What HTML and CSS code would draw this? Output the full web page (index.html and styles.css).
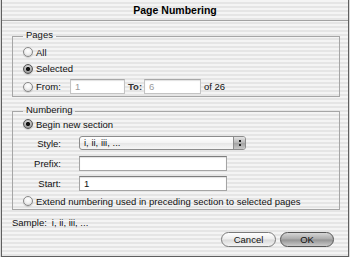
FILE: index.html
```html
<!DOCTYPE html>
<html lang="en">
<head>
    <meta charset="UTF-8">
    <title>Page Numbering</title>
    <link rel="stylesheet" href="styles.css">
</head>
<body>
    <div class="window">
        <div class="titlebar">Page Numbering</div>

        <fieldset class="group pages">
            <legend>Pages</legend>
            <div class="row r-all"><span class="radio"></span><span class="text">All</span></div>
            <div class="row r-sel"><span class="radio on"></span><span class="text">Selected</span></div>
            <div class="row r-from">
                <span class="radio"></span>
                <span class="text from-label">From:</span>
                <span class="field disabled w-from">1</span>
                <span class="text to-label">To:</span>
                <span class="field disabled w-to">6</span>
                <span class="text of">of 26</span>
            </div>
        </fieldset>

        <fieldset class="group numbering">
            <legend>Numbering</legend>
            <div class="row r-begin"><span class="radio on"></span><span class="text">Begin new section</span></div>
            <div class="field-row">
                <span class="label">Style:</span>
                <div class="popup">
                    <span class="popup-text">i, ii, iii, ...</span>
                    <span class="stepper"><i></i><i></i></span>
                </div>
            </div>
            <div class="field-row">
                <span class="label">Prefix:</span>
                <span class="field w-long"></span>
            </div>
            <div class="field-row">
                <span class="label">Start:</span>
                <span class="field w-long">1</span>
            </div>
            <div class="row r-extend"><span class="radio"></span><span class="text">Extend numbering used in preceding section to selected pages</span></div>
        </fieldset>

        <div class="sample">
            <span>Sample:</span>
            <span class="sample-value">i, ii, iii, ...</span>
        </div>

        <div class="buttons">
            <button class="btn">Cancel</button>
            <button class="btn default">OK</button>
        </div>
    </div>
</body>
</html>
```

FILE: styles.css
```css
body {
    margin: 0;
    background: #d9d9d9;
    font-family: "Liberation Sans", Arial, sans-serif;
    font-size: 9.5px;
    color: #111;
}
.window {
    box-sizing: border-box;
    width: 348px;
    height: 257px;
    margin-left: 1px;
    border: 1px solid #5f5f5f;
    border-top: none;
    background: repeating-linear-gradient(to bottom, #f4f4f4 0, #f4f4f4 2px, #e5e5e5 2px, #e5e5e5 4px);
    display: flex;
    flex-direction: column;
}
.titlebar {
    height: 20px;
    line-height: 21px;
    border-bottom: 1px solid #a2a2a2;
    text-align: center;
    font-weight: bold;
    font-size: 10.5px;
    color: #000;
}
.group {
    margin: 8px 8px 0 10px;
    padding: 1px 0 0 10px;
    border: 1px solid #a6a6a6;
    min-width: 0;
}
.group legend {
    padding: 0 3px 2px;
    line-height: 12px;
    font-size: 9.5px;
}
.numbering {
    margin-top: 7px;
    padding-top: 0;
}
.row {
    display: flex;
    align-items: center;
}
.r-all { height: 16px; }
.r-sel { height: 17px; }
.r-from { height: 19px; }
.r-begin { height: 12px; }
.r-extend { height: 16px; }
.radio {
    box-sizing: border-box;
    width: 10px;
    height: 10px;
    border-radius: 50%;
    border: 1px solid #888;
    background: radial-gradient(circle at 50% 35%, #fff 0, #f2f2f2 45%, #cfcfcf 100%);
    box-shadow: 0 1px 1px rgba(0, 0, 0, 0.15);
    flex-shrink: 0;
}
.radio.on {
    border-color: #555;
    background: radial-gradient(circle, #111 0, #111 1.8px, transparent 2.4px),
                radial-gradient(circle at 50% 30%, #e2e2e2 0, #a8a8a8 60%, #7c7c7c 100%);
}
.row .text {
    margin-left: 3px;
}
.from-label {
    width: 34px;
}
.field {
    box-sizing: border-box;
    display: block;
    height: 15px;
    line-height: 13px;
    padding-left: 4px;
    background: #fff;
    border: 1px solid #a4a4a4;
    border-top-color: #7d7d7d;
    box-shadow: inset 0 1px 1px rgba(0, 0, 0, 0.12);
}
.field.disabled {
    color: #9a9a9a;
    border-color: #c4c4c4;
    border-top-color: #a8a8a8;
}
.w-from { width: 55px; }
.w-to { width: 57px; }
.w-long { width: 148px; }
.to-label {
    width: 16px;
    margin-left: 5px;
    font-weight: bold;
    color: #333;
}
.of {
    margin-left: 4px;
}
.field-row {
    display: flex;
    align-items: center;
    height: 20px;
}
.field-row:first-of-type,
.r-begin + .field-row {
    margin-top: 3px;
}
.label {
    box-sizing: border-box;
    width: 56px;
    padding-right: 18px;
    text-align: right;
}
.popup {
    box-sizing: border-box;
    width: 167px;
    height: 14px;
    display: flex;
    align-items: center;
    border: 1px solid #8c8c8c;
    border-radius: 3px;
    background: linear-gradient(#ffffff, #f3f3f3 50%, #e6e6e6 51%, #f6f6f6);
}
.popup-text {
    flex: 1;
    padding-left: 4px;
    line-height: 12px;
}
.stepper {
    width: 11px;
    height: 12px;
    border-left: 1px solid #8c8c8c;
    border-radius: 0 2px 2px 0;
    background: linear-gradient(#e4e4e4, #b4b4b4 50%, #a2a2a2 51%, #c8c8c8);
    display: flex;
    flex-direction: column;
    align-items: center;
    justify-content: center;
    gap: 2px;
}
.stepper i {
    width: 2px;
    height: 2px;
    background: #222;
}
.sample {
    margin: 7px 0 0 10px;
    height: 12px;
    line-height: 12px;
    display: flex;
    gap: 5px;
}
.buttons {
    margin: 3px 14px 0 0;
    display: flex;
    justify-content: flex-end;
    gap: 4px;
}
.btn {
    box-sizing: border-box;
    height: 15px;
    width: 55px;
    padding: 0;
    border: 1px solid #7a7a7a;
    border-radius: 8px;
    font-family: "Liberation Sans", Arial, sans-serif;
    font-size: 9.5px;
    color: #111;
    background: linear-gradient(#ffffff, #ececec 48%, #d9d9d9 52%, #f4f4f4);
}
.btn.default {
    width: 54px;
    border-color: #555;
    background: linear-gradient(#d6d6d6, #a9a9a9 48%, #939393 52%, #cacaca);
}
```
